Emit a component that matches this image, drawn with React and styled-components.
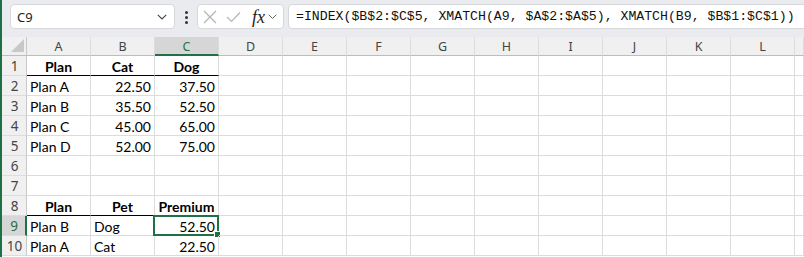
import React from "react";
import styled, { createGlobalStyle } from "styled-components";

const GREEN = "#1e7145";
const GRID = "#dcdcdc";

const Global = createGlobalStyle`
  html, body { margin: 0; padding: 0; background: #fff; }
  body { overflow: hidden; }
`;

const Page = styled.div`
  width: 804px;
  height: 257px;
  overflow: hidden;
  box-sizing: border-box;
  border-left: 2px solid ${GREEN};
  background: #fff;
  display: flex;
  flex-direction: column;
`;

const Toolbar = styled.div`
  height: 37px;
  flex: none;
  background: #e9ebee;
  display: flex;
  align-items: flex-start;
  padding: 4px 0 0 8px;
  box-sizing: border-box;
  & > * {
    flex: none;
  }
`;

const NameBox = styled.div`
  width: 165px;
  height: 25px;
  box-sizing: border-box;
  background: #fff;
  border: 1px solid #d6d8dc;
  border-radius: 4px;
  display: flex;
  align-items: center;
  justify-content: space-between;
  padding: 0 7px 0 6px;
  font-family: "Noto Sans", "Open Sans", sans-serif;
  font-size: 13px;
  color: #222;
`;

const Dots = styled.div`
  margin: 7px 0 0 10px;
  display: flex;
  flex-direction: column;
  gap: 2px;
  span {
    width: 3px;
    height: 3px;
    border-radius: 50%;
    background: #333;
  }
`;

const FxBox = styled.div`
  margin-left: 9px;
  width: 87px;
  height: 25px;
  box-sizing: border-box;
  background: #fff;
  border: 1px solid #d6d8dc;
  border-radius: 4px;
  display: flex;
  align-items: center;
  padding-left: 5px;
  gap: 9px;
`;

const Fx = styled.span`
  font-family: "Liberation Serif", "DejaVu Serif", serif;
  font-style: italic;
  font-size: 18px;
  color: #222;
  margin-left: 2px;
  margin-right: -6px;
  line-height: 1;
`;

const FormulaBox = styled.div`
  margin-left: 4px;
  width: 540px;
  height: 25px;
  box-sizing: border-box;
  background: #fff;
  border: 1px solid #d6d8dc;
  border-radius: 4px;
  display: flex;
  align-items: center;
  padding-left: 7px;
  font-family: "Liberation Mono", "DejaVu Sans Mono", monospace;
  font-size: 13.2px;
  color: #111;
  white-space: nowrap;
`;

const Sheet = styled.div`
  display: grid;
  grid-template-columns: 25px repeat(12, 64px) 1fr;
  grid-template-rows: 19px repeat(10, 20px);
`;

const Corner = styled.div`
  background: #f0f0f0;
  border-right: 1px solid #c8c8c8;
  border-bottom: 1px solid #bdbdbd;
  box-sizing: border-box;
  display: flex;
  align-items: flex-end;
  justify-content: flex-end;
  padding: 0 2px 3px 0;
`;

const ColHead = styled.div`
  box-sizing: border-box;
  background: ${(p) => (p.$active ? "#d6d6d6" : "#f0f0f0")};
  border-right: 1px solid ${GRID};
  border-bottom: ${(p) => (p.$active ? `2px solid ${GREEN}` : "1px solid #bdbdbd")};
  color: ${(p) => (p.$active ? GREEN : "#444")};
  font-family: "Noto Sans", "Open Sans", sans-serif;
  font-size: 12.5px;
  display: flex;
  align-items: center;
  justify-content: center;
  padding-top: ${(p) => (p.$active ? "1px" : "0")};
`;

const RowHead = styled.div`
  box-sizing: border-box;
  background: ${(p) => (p.$active ? "#d6d6d6" : "#f0f0f0")};
  border-right: ${(p) => (p.$active ? `2px solid ${GREEN}` : "1px solid #c8c8c8")};
  border-bottom: 1px solid ${GRID};
  color: ${(p) => (p.$active ? GREEN : "#444")};
  font-family: "Noto Sans", "Open Sans", sans-serif;
  font-size: 13.5px;
  display: flex;
  align-items: center;
  justify-content: center;
  padding-left: 1px;
`;

const Cell = styled.div`
  position: relative;
  box-sizing: border-box;
  border-right: 1px solid ${GRID};
  border-bottom: 1px solid ${(p) => (p.$rule ? "#000" : GRID)};
  font-family: Lato, "Liberation Sans", sans-serif;
  font-size: 14px;
  font-weight: ${(p) => (p.$bold ? 700 : 400)};
  color: #000;
  display: flex;
  align-items: center;
  justify-content: ${(p) =>
    p.$align === "right" ? "flex-end" : p.$align === "center" ? "center" : "flex-start"};
  padding: 2px 3px 0 3px;
  white-space: nowrap;
  overflow: visible;
`;

const Selection = styled.div`
  position: absolute;
  left: -2px;
  top: -1px;
  right: -1px;
  bottom: -1px;
  border: 2px solid ${GREEN};
  pointer-events: none;
  &::after {
    content: "";
    position: absolute;
    right: -4px;
    bottom: -4px;
    width: 5px;
    height: 5px;
    background: ${GREEN};
    border: 1px solid #fff;
  }
`;

const Chevron = ({ size = 10, color = "#444" }) => (
  <svg width={size} height={size * 0.6} viewBox="0 0 10 6" fill="none">
    <path d="M0.8 0.8 L5 5 L9.2 0.8" stroke={color} strokeWidth="1.1" />
  </svg>
);

const Cross = () => (
  <svg width="14" height="14" viewBox="0 0 14 14" fill="none">
    <path d="M1 1 L13 13 M13 1 L1 13" stroke="#b4b4b4" strokeWidth="1.2" />
  </svg>
);

const Check = () => (
  <svg width="15" height="12" viewBox="0 0 15 12" fill="none">
    <path d="M1 6 L5.5 10.5 L14 1.5" stroke="#b4b4b4" strokeWidth="1.2" />
  </svg>
);

const CornerMark = () => (
  <svg width="13" height="13" viewBox="0 0 13 13">
    <polygon points="13,0 13,13 0,13" fill="#c8c8c8" />
  </svg>
);

const columns = ["A", "B", "C", "D", "E", "F", "G", "H", "I", "J", "K", "L", ""];

// row data: [A, B, C] with alignment / bold info
const rows = [
  { cells: ["Plan", "Cat", "Dog"], head: true },
  { cells: ["Plan A", "22.50", "37.50"] },
  { cells: ["Plan B", "35.50", "52.50"] },
  { cells: ["Plan C", "45.00", "65.00"] },
  { cells: ["Plan D", "52.00", "75.00"] },
  { cells: ["", "", ""] },
  { cells: ["", "", ""] },
  { cells: ["Plan", "Pet", "Premium"], head: true },
  { cells: ["Plan B", "Dog", "52.50"], textB: true },
  { cells: ["Plan A", "Cat", "22.50"], textB: true },
];

const alignFor = (row, col) => {
  if (row.head) return "center";
  if (col === 0) return "left";
  if (col === 1 && row.textB) return "left";
  return "right";
};

export default function App() {
  return (
    <>
      <Global />
      <Page>
        <Toolbar>
          <NameBox>
            <span>C9</span>
            <Chevron size={10} />
          </NameBox>
          <Dots>
            <span />
            <span />
            <span />
          </Dots>
          <FxBox>
            <Cross />
            <Check />
            <Fx>fx</Fx>
            <Chevron size={9} color="#666" />
          </FxBox>
          <FormulaBox>=INDEX($B$2:$C$5, XMATCH(A9, $A$2:$A$5), XMATCH(B9, $B$1:$C$1))</FormulaBox>
        </Toolbar>
        <Sheet>
          <Corner>
            <CornerMark />
          </Corner>
          {columns.map((c, i) => (
            <ColHead key={i} $active={c === "C"}>
              {c}
            </ColHead>
          ))}
          {rows.map((row, r) => (
            <React.Fragment key={r}>
              <RowHead $active={r === 8}>{r + 1}</RowHead>
              {columns.map((c, ci) => {
                const text = ci < 3 ? row.cells[ci] : "";
                return (
                  <Cell
                    key={ci}
                    $align={ci < 3 ? alignFor(row, ci) : "left"}
                    $bold={row.head}
                    $rule={row.head && ci < 3}
                  >
                    {text}
                    {r === 8 && ci === 2 && <Selection />}
                  </Cell>
                );
              })}
            </React.Fragment>
          ))}
        </Sheet>
      </Page>
    </>
  );
}
